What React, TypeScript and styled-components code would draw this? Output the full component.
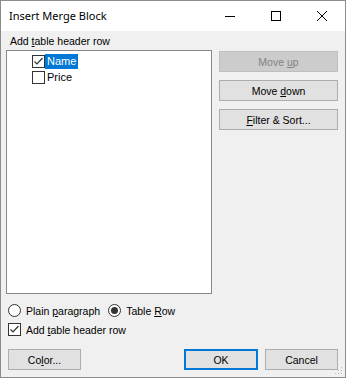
import styled, { createGlobalStyle } from 'styled-components'

const GlobalStyle = createGlobalStyle`
  html, body {
    margin: 0;
    padding: 0;
    background: #ffffff;
  }
  * {
    box-sizing: border-box;
  }
`

const Window = styled.div`
  width: 346px;
  height: 378px;
  border: 1px solid #8c8c8c;
  background: #f0f0f0;
  display: flex;
  flex-direction: column;
  font-family: 'Liberation Sans', Arial, sans-serif;
  font-size: 10.5px;
  color: #000000;
  position: relative;
`

const TitleBar = styled.div`
  height: 30px;
  background: #ffffff;
  display: flex;
  align-items: center;
`

const Title = styled.div`
  flex: 1;
  padding-left: 8px;
  padding-bottom: 1px;
  font-family: 'Noto Sans', 'Open Sans', sans-serif;
  font-size: 11px;
  color: #000000;
`

const CaptionButton = styled.div`
  width: 46px;
  height: 30px;
  display: flex;
  align-items: center;
  justify-content: center;
`

const Body = styled.div`
  flex: 1;
  display: flex;
  flex-direction: column;
  padding: 3px 7px 0 5px;
`

const Label = styled.div`
  height: 16px;
  padding-left: 4px;
  line-height: 14px;
`

const MainRow = styled.div`
  display: flex;
  gap: 7px;
`

const ListBox = styled.div`
  width: 206px;
  height: 244px;
  background: #ffffff;
  border: 1px solid #828790;
  padding: 2px 0 0 25px;
`

const TreeItem = styled.div`
  display: flex;
  align-items: center;
  height: 16px;
`

const ItemText = styled.span<{ $selected?: boolean }>`
  margin-left: ${p => (p.$selected ? '0' : '1px')};
  padding: 0 2px 0 ${p => (p.$selected ? '2px' : '1px')};
  height: 15px;
  line-height: 15px;
  font-size: 11px;
  background: ${p => (p.$selected ? '#0078d7' : 'transparent')};
  color: ${p => (p.$selected ? '#ffffff' : '#000000')};
`

const ButtonColumn = styled.div`
  display: flex;
  flex-direction: column;
  gap: 8px;
  padding-top: 1px;
`

const Button = styled.button<{ $width: number; $default?: boolean }>`
  width: ${p => p.$width}px;
  height: 21px;
  margin: 0;
  padding: 0;
  font-family: 'Liberation Sans', Arial, sans-serif;
  font-size: 10.5px;
  color: #000000;
  background: #e1e1e1;
  border: ${p => (p.$default ? '2px solid #0078d7' : '1px solid #adadad')};
  &:disabled {
    background: #cccccc;
    border-color: #bfbfbf;
    color: #838383;
  }
`

const OptionRow = styled.div<{ $top: number }>`
  display: flex;
  align-items: center;
  height: 13px;
  padding-left: 2px;
  margin-top: ${p => p.$top}px;
`

const Option = styled.div`
  display: flex;
  align-items: center;
  gap: 5px;
  margin-right: 8px;
`

const Box = styled.span`
  width: 13px;
  height: 13px;
  border: 1px solid #333333;
  background: #ffffff;
  display: inline-flex;
  align-items: center;
  justify-content: center;
  flex-shrink: 0;
`

const Radio = styled.span<{ $checked?: boolean }>`
  width: 13px;
  height: 13px;
  border-radius: 50%;
  border: 1px solid #333333;
  background: #ffffff;
  display: inline-flex;
  align-items: center;
  justify-content: center;
  flex-shrink: 0;
  &::after {
    content: '';
    display: ${p => (p.$checked ? 'block' : 'none')};
    width: 7px;
    height: 7px;
    border-radius: 50%;
    background: #333333;
  }
`

const BottomRow = styled.div`
  display: flex;
  align-items: center;
  gap: 7px;
  padding-left: 2px;
  margin-top: 13px;
`

const Spacer = styled.div`
  flex: 1;
`

const Grip = styled.svg`
  position: absolute;
  right: 2px;
  bottom: 2px;
`

const Check = () => (
  <svg width="11" height="11" viewBox="0 0 11 11">
    <path d="M1.5 5.5 L4 8 L9.5 2" fill="none" stroke="#333333" strokeWidth="1.2" />
  </svg>
)

const App = () => {
  return (
    <>
      <GlobalStyle />
      <Window>
        <TitleBar>
          <Title>Insert Merge Block</Title>
          <CaptionButton>
            <svg width="10" height="10" viewBox="0 0 10 10">
              <path d="M0 5.5 H10" stroke="#000" strokeWidth="1" />
            </svg>
          </CaptionButton>
          <CaptionButton>
            <svg width="10" height="10" viewBox="0 0 10 10">
              <rect x="0.5" y="0.5" width="9" height="9" fill="none" stroke="#000" strokeWidth="1" />
            </svg>
          </CaptionButton>
          <CaptionButton>
            <svg width="10" height="10" viewBox="0 0 10 10">
              <path d="M0 0 L10 10 M10 0 L0 10" stroke="#000" strokeWidth="1" />
            </svg>
          </CaptionButton>
        </TitleBar>
        <Body>
          <Label>
            Add <u>t</u>able header row
          </Label>
          <MainRow>
            <ListBox>
              <TreeItem>
                <Box>
                  <Check />
                </Box>
                <ItemText $selected>Name</ItemText>
              </TreeItem>
              <TreeItem>
                <Box />
                <ItemText>Price</ItemText>
              </TreeItem>
            </ListBox>
            <ButtonColumn>
              <Button $width={119} disabled>
                Move <u>u</u>p
              </Button>
              <Button $width={119}>
                Move <u>d</u>own
              </Button>
              <Button $width={119}>
                <u>F</u>ilter &amp; Sort...
              </Button>
            </ButtonColumn>
          </MainRow>
          <OptionRow $top={10}>
            <Option>
              <Radio />
              <span>
                Plain <u>p</u>aragraph
              </span>
            </Option>
            <Option>
              <Radio $checked />
              <span>
                Table <u>R</u>ow
              </span>
            </Option>
          </OptionRow>
          <OptionRow $top={6}>
            <Option>
              <Box>
                <Check />
              </Box>
              <span>
                Add <u>t</u>able header row
              </span>
            </Option>
          </OptionRow>
          <BottomRow>
            <Button $width={73}>
              Co<u>l</u>or...
            </Button>
            <Spacer />
            <Button $width={74} $default>
              OK
            </Button>
            <Button $width={73}>Cancel</Button>
          </BottomRow>
        </Body>
        <Grip width="8" height="8" viewBox="0 0 8 8">
          <rect x="6" y="0" width="1" height="1" fill="#bcbcbc" />
          <rect x="3" y="3" width="1" height="1" fill="#bcbcbc" />
          <rect x="6" y="3" width="1" height="1" fill="#bcbcbc" />
          <rect x="0" y="6" width="1" height="1" fill="#bcbcbc" />
          <rect x="3" y="6" width="1" height="1" fill="#bcbcbc" />
          <rect x="6" y="6" width="1" height="1" fill="#bcbcbc" />
        </Grip>
      </Window>
    </>
  )
}

export default App
